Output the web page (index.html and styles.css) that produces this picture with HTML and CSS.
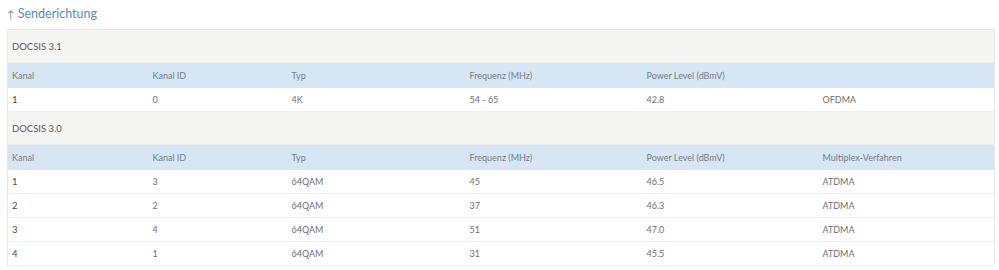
FILE: index.html
```html
<!DOCTYPE html>
<html lang="de">
<head>
<meta charset="utf-8">
<link rel="stylesheet" href="styles.css">
</head>
<body>
<h2 class="title"><span class="arrow">↑</span> Senderichtung</h2>
<table class="ch">
  <colgroup>
    <col class="c1"><col class="c2"><col class="c3"><col class="c4"><col class="c5"><col class="c6">
  </colgroup>
  <tbody>
    <tr class="sec"><td colspan="6">DOCSIS 3.1</td></tr>
    <tr class="head"><td>Kanal</td><td>Kanal ID</td><td>Typ</td><td>Frequenz (MHz)</td><td>Power Level (dBmV)</td><td></td></tr>
    <tr class="row"><td class="first">1</td><td>0</td><td>4K</td><td>54 - 65</td><td>42.8</td><td>OFDMA</td></tr>
    <tr class="sec"><td colspan="6">DOCSIS 3.0</td></tr>
    <tr class="head"><td>Kanal</td><td>Kanal ID</td><td>Typ</td><td>Frequenz (MHz)</td><td>Power Level (dBmV)</td><td>Multiplex-Verfahren</td></tr>
    <tr class="row"><td class="first">1</td><td>3</td><td>64QAM</td><td>45</td><td>46.5</td><td>ATDMA</td></tr>
    <tr class="row"><td class="first">2</td><td>2</td><td>64QAM</td><td>37</td><td>46.3</td><td>ATDMA</td></tr>
    <tr class="row"><td class="first">3</td><td>4</td><td>64QAM</td><td>51</td><td>47.0</td><td>ATDMA</td></tr>
    <tr class="row"><td class="first">4</td><td>1</td><td>64QAM</td><td>31</td><td>45.5</td><td>ATDMA</td></tr>
  </tbody>
</table>
</body>
</html>
```
FILE: styles.css
```css
html, body {
  margin: 0;
  padding: 0;
  background: #fff;
}
body {
  padding: 0 5px 0 7px;
  font-family: "Lato", "Liberation Sans", sans-serif;
  color: #555;
}
.title {
  margin: 0;
  height: 29px;
  line-height: 27px;
  font-size: 12.5px;
  font-weight: normal;
  color: #5b8bb6;
}
.arrow {
  font-size: 10px;
}
.ch {
  width: 987px;
  border-collapse: collapse;
  table-layout: fixed;
  font-size: 9px;
  border: 1px solid #e8e8e6;
}
.c1 { width: 141px; }
.c2 { width: 139px; }
.c3 { width: 178px; }
.c4 { width: 177px; }
.c5 { width: 176px; }
.c6 { width: 176px; }
.ch td {
  padding: 0 4px;
  white-space: nowrap;
}
.sec td {
  height: 32px;
  background: #f5f5f3;
  color: #5a5a5a;
  font-size: 9.5px;
  border-bottom: 1px solid #ebebe9;
}
.head td {
  height: 25px;
  background: #d6e6f5;
  color: #777d83;
}
.row td {
  height: 23px;
  background: #fff;
  color: #707070;
  border-bottom: 1px solid #eeeeec;
}
.row td.first {
  color: #4a4a4a;
  font-size: 9.5px;
}
```
